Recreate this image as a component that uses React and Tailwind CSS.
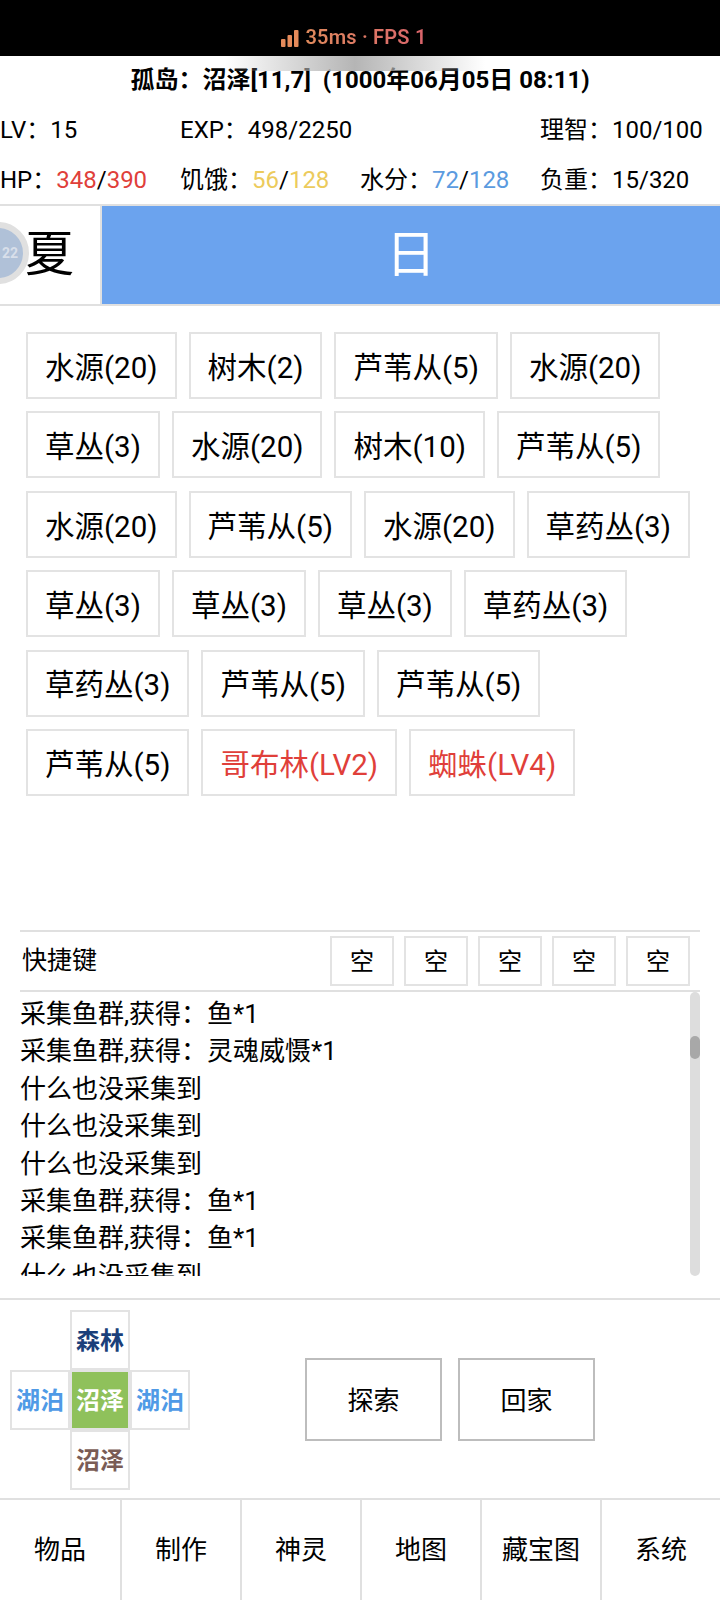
import React from "react";

const rows = [
  ["水源(20)", "树木(2)", "芦苇从(5)", "水源(20)"],
  ["草丛(3)", "水源(20)", "树木(10)", "芦苇从(5)"],
  ["水源(20)", "芦苇从(5)", "水源(20)", "草药丛(3)"],
  ["草丛(3)", "草丛(3)", "草丛(3)", "草药丛(3)"],
  ["草药丛(3)", "芦苇从(5)", "芦苇从(5)"],
  ["芦苇从(5)", "哥布林(LV2)", "蜘蛛(LV4)"],
];
const logs = ["采集鱼群,获得：鱼*1", "采集鱼群,获得：灵魂威慑*1", "什么也没采集到", "什么也没采集到", "什么也没采集到", "采集鱼群,获得：鱼*1", "采集鱼群,获得：鱼*1", "什么也没采集到"];
const font = "[font-family:Roboto,'Noto_Sans_CJK_SC',sans-serif]";

function Cell({ children, className }) {
  return <div className={"w-[60px] h-[60px] border-2 border-[#e3e3e3] flex items-center justify-center pt-[2px] text-[24px] font-bold " + className}>{children}</div>;
}

export default function App() {
  return (
    <div className={"relative w-[720px] h-[1600px] overflow-hidden bg-white text-black flex flex-col " + font}>
      <div className="h-[56px] shrink-0 bg-black flex items-end justify-center pb-[4px] pr-[12px] gap-[6px] text-[20px] font-semibold">
        <svg width="18" height="18" viewBox="0 0 18 18" className="mb-[4px]">
          <rect x="0" y="9" width="4.5" height="8" rx="1" fill="#e58a5a" />
          <rect x="6.5" y="5" width="4.5" height="12" rx="1" fill="#e58a5a" />
          <rect x="13" y="0" width="4.5" height="17" rx="1" fill="#e58a5a" />
        </svg>
        <span className="tracking-[0.2px] bg-gradient-to-r from-[#e08a5c] to-[#d9636b] bg-clip-text text-transparent">35ms · FPS 1</span>
      </div>
      <div className="absolute left-[225px] top-[56px] w-[260px] h-[15px] bg-gradient-to-r from-transparent via-[#b5b5b5] to-transparent" />
      <div className="h-[48px] shrink-0 flex items-center justify-center text-[24px] font-bold whitespace-pre">孤岛：沼泽[11,7]  (1000年06月05日 08:11)</div>

      <div className="h-[50px] pt-[2px] shrink-0 grid grid-cols-[180px_180px_180px_180px] items-center text-[24px] whitespace-pre">
        <div>LV：15</div>
        <div className="col-span-2">EXP：498/2250</div>
        <div>理智：100/100</div>
      </div>
      <div className="h-[50px] pt-[2px] shrink-0 grid grid-cols-[180px_180px_180px_180px] items-center text-[24px] whitespace-pre">
        <div>HP：<span className="text-[#e03f3a]">348</span>/<span className="text-[#e03f3a]">390</span></div>
        <div>饥饿：<span className="text-[#eccb5c]">56</span>/<span className="text-[#eccb5c]">128</span></div>
        <div>水分：<span className="text-[#5b9bdf]">72</span>/<span className="text-[#5b9bdf]">128</span></div>
        <div>负重：15/320</div>
      </div>

      <div className="h-[102px] shrink-0 border-y-2 border-[#e0e0e0] flex">
        <div className="relative w-[102px] shrink-0 overflow-hidden flex items-center justify-end pr-[26px] text-[49px] border-r-2 border-[#e0e0e0]">
          <div className="absolute left-[-33px] top-[16px] w-[62px] h-[62px] rounded-full bg-[#b0c1d8] border-[6px] border-[#e0e0e0] flex items-center justify-center text-[14px] font-bold text-[#d8dfea] pl-[24px]">22</div>
          夏
        </div>
        <div className="flex-1 bg-[#6ba3ee] flex items-center justify-center text-white text-[50px]">日</div>
      </div>

      <div className="h-[624px] shrink-0 pl-[26px] pt-[26px] flex flex-col gap-[12.4px]">
        {rows.map((r, i) => (
          <div key={i} className="flex gap-[12px]">
            {r.map((t, j) => (
              <div key={j} className={"h-[67px] px-[17px] pt-[5px] border-2 border-[#e3e3e3] flex items-center text-[29.5px] whitespace-nowrap " + (t.includes("LV") ? "text-[#e03f3a]" : "")}>{t}</div>
            ))}
          </div>
        ))}
      </div>

      <div className="mx-[20px] h-[62px] shrink-0 border-y-2 border-[#e0e0e0] flex items-center justify-between pl-[2px] pr-[10px]">
        <div className="text-[25px] mb-[1px]">快捷键</div>
        <div className="flex gap-[10px]">
          {[0, 1, 2, 3, 4].map((i) => (
            <div key={i} className="w-[64px] h-[50px] pt-[2px] border-2 border-[#e3e3e3] flex items-center justify-center text-[24px]">空</div>
          ))}
        </div>
      </div>

      <div className="mx-[20px] h-[284px] shrink-0 flex">
        <div className="flex-1 overflow-hidden text-[26px] leading-[37.4px] pt-[4px]">
          {logs.map((l, i) => <div key={i} className="whitespace-nowrap">{l}</div>)}
        </div>
        <div className="relative w-[10px] h-[284px] rounded-[5px] bg-[#dddddd]">
          <div className="absolute top-[44px] left-0 w-[10px] h-[23px] rounded-[5px] bg-[#a8a8a8]" />
        </div>
      </div>

      <div className="mt-[22px] h-[200px] shrink-0 border-t-2 border-[#e0e0e0] flex">
        <div className="pl-[10px] pt-[10px] w-[305px] shrink-0 grid grid-cols-[60px_60px_60px] grid-rows-[60px_60px_60px] content-start">
          <div />
          <Cell className="text-[#1a3f7a]">森林</Cell>
          <div />
          <Cell className="text-[#4f9ae6]">湖泊</Cell>
          <Cell className="bg-[#8fc15b] text-white border-[#dcdcdc]">沼泽</Cell>
          <Cell className="text-[#4f9ae6]">湖泊</Cell>
          <div />
          <Cell className="text-[#7a5c55]">沼泽</Cell>
          <div />
        </div>
        <div className="flex gap-[16px] pt-[58px]">
          <div className="w-[137px] h-[83px] pt-[3px] border-2 border-[#bdbdbd] flex items-center justify-center text-[26px]">探索</div>
          <div className="w-[137px] h-[83px] pt-[3px] border-2 border-[#bdbdbd] flex items-center justify-center text-[26px]">回家</div>
        </div>
      </div>

      <div className="flex-1 border-t-2 border-[#e0e0e0] grid grid-cols-6 text-[26px]">
        {["物品", "制作", "神灵", "地图", "藏宝图", "系统"].map((t, i) => (
          <div key={i} className={"flex items-center justify-center " + (i > 0 ? "border-l-2 border-[#e0e0e0]" : "")}>{t}</div>
        ))}
      </div>
    </div>
  );
}
